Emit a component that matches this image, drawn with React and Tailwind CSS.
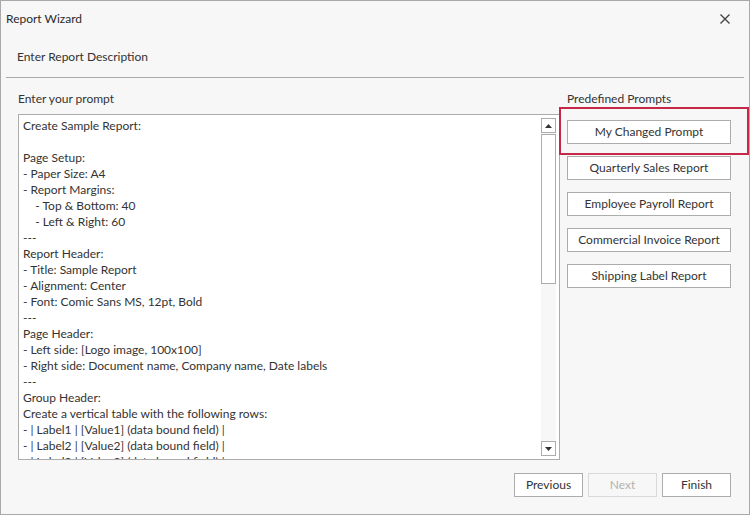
import React from 'react';

const promptLines = [
  'Create Sample Report:',
  '',
  'Page Setup:',
  '- Paper Size: A4',
  '- Report Margins:',
  '    - Top & Bottom: 40',
  '    - Left & Right: 60',
  '---',
  'Report Header:',
  '- Title: Sample Report',
  '- Alignment: Center',
  '- Font: Comic Sans MS, 12pt, Bold',
  '---',
  'Page Header:',
  '- Left side: [Logo image, 100x100]',
  '- Right side: Document name, Company name, Date labels',
  '---',
  'Group Header:',
  'Create a vertical table with the following rows:',
  '- | Label1 | [Value1] (data bound field) |',
  '- | Label2 | [Value2] (data bound field) |',
  '- | Label3 | [Value3] (data bound field) |',
];

const predefined = [
  'My Changed Prompt',
  'Quarterly Sales Report',
  'Employee Payroll Report',
  'Commercial Invoice Report',
  'Shipping Label Report',
];

function WizButton({ children, disabled }) {
  return (
    <button
      className={
        disabled
          ? 'h-[24px] w-[69px] border border-[#d9d9d9] bg-[#f7f7f7] text-[#b3b3b3]'
          : 'h-[24px] w-[69px] border border-[#acacac] bg-white text-[#333333]'
      }
    >
      {children}
    </button>
  );
}

export default function App() {
  return (
    <div
      className="w-[750px] h-[515px] border border-[#a9a9a9] bg-[#f7f7f7] text-[#333333] text-[12px] leading-[16px] flex flex-col overflow-hidden"
      style={{ fontFamily: '"Segoe UI", Lato, "Open Sans", sans-serif' }}
    >
      {/* Title bar */}
      <div className="h-[35px] flex items-center justify-between pl-[5px] pr-[18px]">
        <span className="text-[#2b2b2b]">Report Wizard</span>
        <svg width="12" height="12" viewBox="0 0 12 12">
          <path d="M1.5 1.5 L10.5 10.5 M10.5 1.5 L1.5 10.5" stroke="#444" strokeWidth="1.4" />
        </svg>
      </div>

      {/* Page header */}
      <div className="h-[41px] flex items-center pl-[16px]">Enter Report Description</div>
      <div className="mx-[5px] border-t border-[#a9a9a9]" />

      {/* Body */}
      <div className="flex pl-[17px] relative">
        <div className="flex flex-col w-[542px]">
          <div className="pt-[13px] pb-[7px]">Enter your prompt</div>
          <div className="h-[346px] border border-[#acacac] bg-white flex">
            <div className="flex-1 pl-[4px] pt-[3px] overflow-hidden whitespace-pre">
              {promptLines.map((line, i) => (
                <div key={i} className="h-[16px]">{line}</div>
              ))}
            </div>
            <div className="w-[15px] mr-[3px] mt-[3px] mb-[3px] flex flex-col bg-[#f7f7f7]">
              <div className="h-[15px] border border-[#acacac] bg-white flex items-center justify-center">
                <svg width="7" height="4" viewBox="0 0 7 4">
                  <path d="M0 4 L3.5 0 L7 4 Z" fill="#333" />
                </svg>
              </div>
              <div className="mt-[1px] h-[150px] border border-[#acacac] bg-white" />
              <div className="flex-1" />
              <div className="h-[15px] border border-[#acacac] bg-white flex items-center justify-center">
                <svg width="7" height="4" viewBox="0 0 7 4">
                  <path d="M0 0 L7 0 L3.5 4 Z" fill="#333" />
                </svg>
              </div>
            </div>
          </div>
        </div>

        <div className="flex flex-col ml-[7px] w-[164px]">
          <div className="pt-[13px] pb-[13px]">Predefined Prompts</div>
          <div className="flex flex-col gap-[12px]">
            {predefined.map((p) => (
              <button key={p} className="h-[24px] w-[164px] border border-[#acacac] bg-white text-[#333333]">
                {p}
              </button>
            ))}
          </div>
        </div>

        {/* highlight marker */}
        <div className="absolute left-[558px] top-[29px] w-[190px] h-[48px] border-2 border-[#c7284a] pointer-events-none" />
      </div>

      {/* Footer */}
      <div className="flex justify-end gap-[5px] pr-[18px] pt-[13px]">
        <WizButton>Previous</WizButton>
        <WizButton disabled>Next</WizButton>
        <WizButton>Finish</WizButton>
      </div>
    </div>
  );
}
